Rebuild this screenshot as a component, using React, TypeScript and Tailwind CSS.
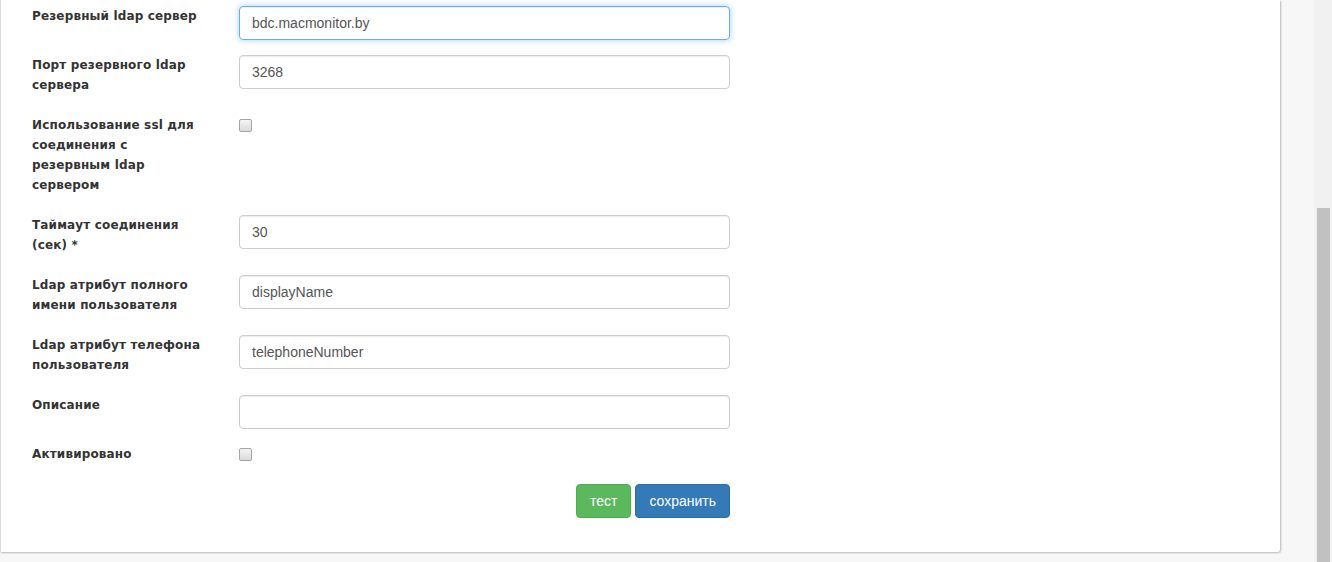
import React from 'react';

type Field = {
    label: string[];
    value?: string;
    kind: 'input' | 'checkbox';
    focused?: boolean;
};

const fields: Field[] = [
    { label: ['Резервный ldap сервер'], value: 'bdc.macmonitor.by', kind: 'input', focused: true },
    { label: ['Порт резервного ldap', 'сервера'], value: '3268', kind: 'input' },
    { label: ['Использование ssl для', 'соединения с', 'резервным ldap', 'сервером'], kind: 'checkbox' },
    { label: ['Таймаут соединения', '(сек) *'], value: '30', kind: 'input' },
    { label: ['Ldap атрибут полного', 'имени пользователя'], value: 'displayName', kind: 'input' },
    { label: ['Ldap атрибут телефона', 'пользователя'], value: 'telephoneNumber', kind: 'input' },
    { label: ['Описание'], value: '', kind: 'input' },
    { label: ['Активировано'], kind: 'checkbox' },
];

const Checkbox = () => (
    <span className="block mt-[4px] w-[13px] h-[13px] rounded-[2px] border border-[#a6a6a6] bg-gradient-to-b from-[#f4f4f4] to-[#dadada]" />
);

const App = () => {
    return (
        <div
            className="relative h-[562px] w-[1332px] overflow-hidden bg-[#f7f7f7]"
            style={{ fontFamily: '"Liberation Sans", Arial, sans-serif' }}
        >
            {/* Card */}
            <div className="w-[1280px] bg-white border-l border-[#d9d9d9] rounded-br-[3px] shadow-[1px_1px_2px_rgba(0,0,0,0.25)] pt-[6px] pb-[34px]">
                <div className="flex flex-col pl-[31px]">
                    {fields.map((f, i) => (
                        <div key={i} className="flex mb-[15px]">
                            <div
                                className="w-[207px] shrink-0 pr-[33px] pb-[5px] text-[12px] leading-[20px] font-bold tracking-[0.15px] text-[#333]"
                                style={{ fontFamily: '"DejaVu Sans", Verdana, sans-serif' }}
                            >
                                {f.label.map((line, j) => (
                                    <div key={j}>{line}</div>
                                ))}
                            </div>
                            {f.kind === 'input' ? (
                                <div
                                    className={
                                        f.focused
                                            ? 'w-[491px] h-[34px] rounded-[4px] border border-[#66afe9] shadow-[inset_0_1px_1px_rgba(0,0,0,0.075),0_0_6px_rgba(102,175,233,0.6)] px-[12px] flex items-center text-[14px] text-[#555]'
                                            : 'w-[491px] h-[34px] rounded-[4px] border border-[#ccc] shadow-[inset_0_1px_1px_rgba(0,0,0,0.075)] px-[12px] flex items-center text-[14px] text-[#555]'
                                    }
                                >
                                    {f.value}
                                </div>
                            ) : (
                                <Checkbox />
                            )}
                        </div>
                    ))}
                    <div className="flex justify-end gap-[4px] w-[698px]">
                        <button className="h-[34px] px-[13px] rounded-[4px] border border-[#4cae4c] bg-[#5cb85c] text-white text-[14px]">
                            тест
                        </button>
                        <button className="h-[34px] px-[13px] rounded-[4px] border border-[#2e6da4] bg-[#337ab7] text-white text-[14px]">
                            сохранить
                        </button>
                    </div>
                </div>
            </div>

            {/* Scrollbar */}
            <div className="absolute top-0 right-0 h-full w-[18px] bg-[#f1f1f1]">
                <div className="absolute left-[3px] top-[208px] bottom-0 w-[13px] bg-[#c1c1c1]" />
            </div>
        </div>
    );
};

export default App;
